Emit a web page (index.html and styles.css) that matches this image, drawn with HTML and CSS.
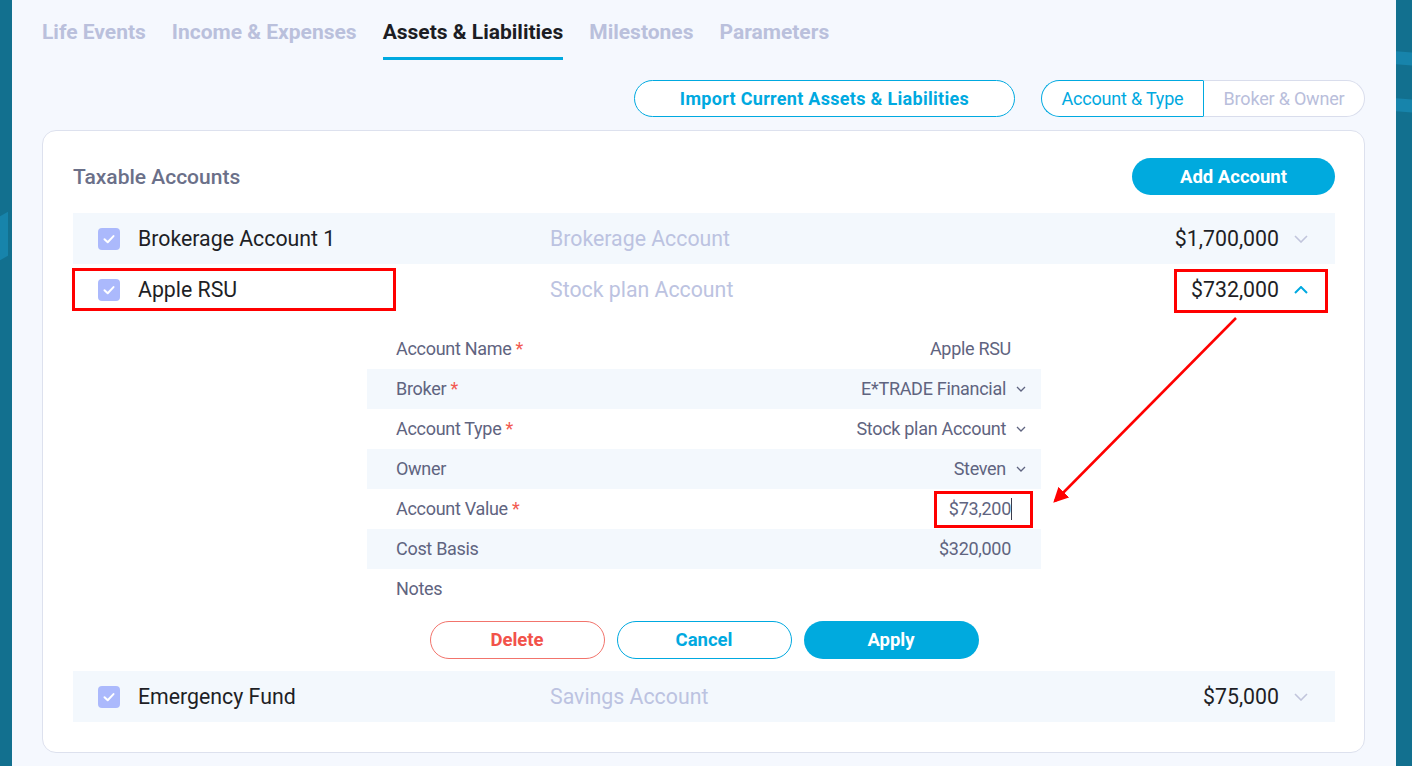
FILE: index.html
```html
<!DOCTYPE html>
<html lang="en">
<head>
  <meta charset="UTF-8" />
  <meta name="viewport" content="width=device-width, initial-scale=1.0"/>
  <title>Assets &amp; Liabilities</title>
  <link rel="stylesheet" href="styles.css">
</head>
<body>

  <div class="app">
    <div class="edge edge-left"><span class="blob blob-a"></span></div>

    <main class="panel">
      <!-- Section tabs -->
      <nav class="tabs">
        <a class="tab">Life Events</a>
        <a class="tab">Income &amp; Expenses</a>
        <a class="tab active">Assets &amp; Liabilities</a>
        <a class="tab">Milestones</a>
        <a class="tab">Parameters</a>
      </nav>

      <!-- Toolbar -->
      <div class="toolbar">
        <button class="btn-outline import-btn">Import Current Assets &amp; Liabilities</button>
        <div class="segmented">
          <button class="seg active">Account &amp; Type</button>
          <button class="seg">Broker &amp; Owner</button>
        </div>
      </div>

      <!-- Accounts card -->
      <section class="card">
        <div class="card-head">
          <h3>Taxable Accounts</h3>
          <button class="btn-primary add-btn">Add Account</button>
        </div>

        <div class="acc-row shaded">
          <div class="acc-name">
            <span class="check"><svg viewBox="0 0 22 22"><path d="M6.5 11.2l3.2 3.1 5.8-6.2"/></svg></span>
            Brokerage Account 1
          </div>
          <div class="acc-type">Brokerage Account</div>
          <div class="acc-value">$1,700,000
            <svg class="chev" viewBox="0 0 14 8"><path d="M1 1l6 6 6-6"/></svg>
          </div>
        </div>

        <div class="acc-row">
          <div class="acc-name">
            <span class="check"><svg viewBox="0 0 22 22"><path d="M6.5 11.2l3.2 3.1 5.8-6.2"/></svg></span>
            Apple RSU
          </div>
          <div class="acc-type">Stock plan Account</div>
          <div class="acc-value">$732,000
            <svg class="chev open" viewBox="0 0 14 8"><path d="M1 7l6-6 6 6"/></svg>
          </div>
        </div>

        <!-- Expanded account editor -->
        <div class="details">
          <div class="field">
            <span class="label">Account Name <em>*</em></span>
            <span class="value plain">Apple RSU</span>
          </div>
          <div class="field shaded">
            <span class="label">Broker <em>*</em></span>
            <span class="value">E*TRADE Financial <svg class="mini-chev" viewBox="0 0 10 6"><path d="M1 1l4 4 4-4"/></svg></span>
          </div>
          <div class="field">
            <span class="label">Account Type <em>*</em></span>
            <span class="value">Stock plan Account <svg class="mini-chev" viewBox="0 0 10 6"><path d="M1 1l4 4 4-4"/></svg></span>
          </div>
          <div class="field shaded">
            <span class="label">Owner</span>
            <span class="value">Steven <svg class="mini-chev" viewBox="0 0 10 6"><path d="M1 1l4 4 4-4"/></svg></span>
          </div>
          <div class="field">
            <span class="label">Account Value <em>*</em></span>
            <span class="value plain editing">$73,200<i class="caret"></i></span>
          </div>
          <div class="field shaded">
            <span class="label">Cost Basis</span>
            <span class="value plain">$320,000</span>
          </div>
          <div class="field">
            <span class="label">Notes</span>
            <span class="value plain"></span>
          </div>
        </div>

        <div class="actions">
          <button class="btn-outline danger">Delete</button>
          <button class="btn-outline">Cancel</button>
          <button class="btn-primary">Apply</button>
        </div>

        <div class="acc-row shaded">
          <div class="acc-name">
            <span class="check"><svg viewBox="0 0 22 22"><path d="M6.5 11.2l3.2 3.1 5.8-6.2"/></svg></span>
            Emergency Fund
          </div>
          <div class="acc-type">Savings Account</div>
          <div class="acc-value">$75,000
            <svg class="chev" viewBox="0 0 14 8"><path d="M1 1l6 6 6-6"/></svg>
          </div>
        </div>
      </section>
    </main>

    <div class="edge edge-right"><span class="blob blob-b"></span><span class="blob blob-c"></span></div>
  </div>

  <!-- Review markup drawn over the page -->
  <svg class="markup" width="1412" height="766" viewBox="0 0 1412 766">
    <defs>
      <marker id="head" markerWidth="6" markerHeight="6" refX="5" refY="3" orient="auto">
        <path d="M0 0L6 3L0 6z" fill="#f00"/>
      </marker>
    </defs>
    <rect x="73.5" y="269.5" width="321" height="40" />
    <rect x="1175.5" y="270.5" width="151" height="41" />
    <rect x="935.5" y="492.5" width="96" height="34" />
    <line x1="1236" y1="318" x2="1055" y2="501" marker-end="url(#head)" />
  </svg>

</body>
</html>
```

FILE: styles.css
```css
* {
  box-sizing: border-box;
}

body {
  margin: 0;
  font-family: Roboto, 'Noto Sans', sans-serif;
  background: #12708f;
  height: 100vh;
  overflow: hidden;
}

button {
  font-family: inherit;
  cursor: pointer;
}

.app {
  display: flex;
  height: 766px;
}

.edge {
  position: relative;
  background: #12708f;
  overflow: hidden;
}

.edge-left {
  width: 12px;
}

.edge-right {
  width: 16px;
}

.blob {
  position: absolute;
  background: #1784ab;
}

.blob-a {
  left: -14px;
  top: 218px;
  width: 22px;
  height: 44px;
  transform: skewY(-30deg);
}

.blob-b {
  left: 0;
  top: 52px;
  width: 20px;
  height: 13px;
  transform: skewY(4deg);
}

.blob-c {
  left: 0;
  top: 99px;
  width: 20px;
  height: 13px;
  transform: skewY(4deg);
}

.panel {
  flex: 1;
  background: #f5f8fe;
  padding: 0 31px 0 30px;
}

/* Tabs */
.tabs {
  display: flex;
  gap: 26px;
}

.tab {
  padding-top: 19px;
  line-height: 26px;
  padding-bottom: 12px;
  border-bottom: 3px solid transparent;
  font-size: 21px;
  font-weight: 700;
  color: #bac0dc;
}

.tab.active {
  color: #1c1d24;
  border-bottom-color: #00a9e0;
}

/* Toolbar */
.toolbar {
  display: flex;
  justify-content: flex-end;
  gap: 26px;
  margin-top: 20px;
}

.btn-outline {
  height: 37px;
  border: 1px solid #00a9e0;
  border-radius: 20px;
  background: #fff;
  color: #00a9e0;
  font-size: 18.5px;
  font-weight: 700;
}

.import-btn {
  width: 381px;
  font-size: 18px;
  letter-spacing: 0.3px;
}

.segmented {
  display: flex;
  height: 37px;
}

.seg {
  width: 162px;
  border: 1px solid #d9ddec;
  background: #fff;
  color: #b9bedb;
  font-size: 18px;
  letter-spacing: -0.2px;
}

.seg:first-child {
  border-radius: 20px 0 0 20px;
  border-right: none;
}

.seg:last-child {
  border-radius: 0 20px 20px 0;
  border-left: 1px solid #00a9e0;
}

.seg.active {
  border-color: #00a9e0;
  color: #00a9e0;
}

.btn-primary {
  height: 38px;
  border: none;
  border-radius: 20px;
  background: #00aade;
  color: #fff;
  font-size: 18.5px;
  font-weight: 700;
}

/* Card */
.card {
  margin-top: 13px;
  background: #fff;
  border: 1px solid #dde1ee;
  border-radius: 14px;
  padding: 27px 29px 30px 30px;
}

.card-head {
  display: flex;
  justify-content: space-between;
  align-items: center;
  margin-bottom: 18px;
}

.card-head h3 {
  margin: 0;
  font-size: 21px;
  font-weight: 500;
  color: #6b7089;
}

.add-btn {
  width: 203px;
  height: 37px;
}

.acc-row {
  display: grid;
  grid-template-columns: 452px 1fr auto;
  align-items: center;
  height: 51px;
  padding: 0 27px 0 25px;
  font-size: 21.3px;
}

.shaded {
  background: #f3f8fd;
}

.acc-name {
  display: flex;
  align-items: center;
  gap: 18px;
  color: #1e1f26;
}

.check {
  width: 22px;
  height: 22px;
  border-radius: 4px;
  background: #abb9fc;
}

.check svg {
  display: block;
  width: 22px;
  height: 22px;
  fill: none;
  stroke: #fff;
  stroke-width: 2;
  stroke-linecap: round;
  stroke-linejoin: round;
}

.acc-type {
  color: #bcc3e1;
}

.acc-value {
  display: flex;
  align-items: center;
  gap: 15px;
  color: #1e1f26;
}

.chev {
  width: 14px;
  height: 8px;
  fill: none;
  stroke: #c1c5dc;
  stroke-width: 1.6;
}

.chev.open {
  stroke: #00a9e0;
  stroke-width: 2;
}

/* Expanded editor */
.details {
  width: 674px;
  margin: 14px auto 0;
}

.field {
  display: flex;
  justify-content: space-between;
  align-items: center;
  height: 40px;
  padding: 0 15px 1px 29px;
  font-size: 18px;
  color: #5f6480;
  letter-spacing: -0.3px;
}

.label em {
  font-style: normal;
  color: #f25a52;
}

.value {
  display: flex;
  align-items: center;
  gap: 10px;
}

.value.plain {
  padding-right: 15px;
}

.mini-chev {
  width: 10px;
  height: 6px;
  fill: none;
  stroke: #5f6480;
  stroke-width: 1.3;
}

.editing {
  position: relative;
}

.caret {
  position: absolute;
  right: 14px;
  top: 0;
  width: 1px;
  height: 22px;
  background: #3a3d4d;
}

.actions {
  display: flex;
  justify-content: center;
  gap: 12px;
  margin: 12px 0;
}

.actions button {
  width: 175px;
  height: 38px;
}

.btn-outline.danger {
  border-color: #f2746c;
  color: #f2524a;
}

/* Markup layer */
.markup {
  position: absolute;
  top: 0;
  left: 0;
  pointer-events: none;
}

.markup rect {
  fill: none;
  stroke: #f00;
  stroke-width: 3;
}

.markup line {
  stroke: #f00;
  stroke-width: 2.5;
}
```
